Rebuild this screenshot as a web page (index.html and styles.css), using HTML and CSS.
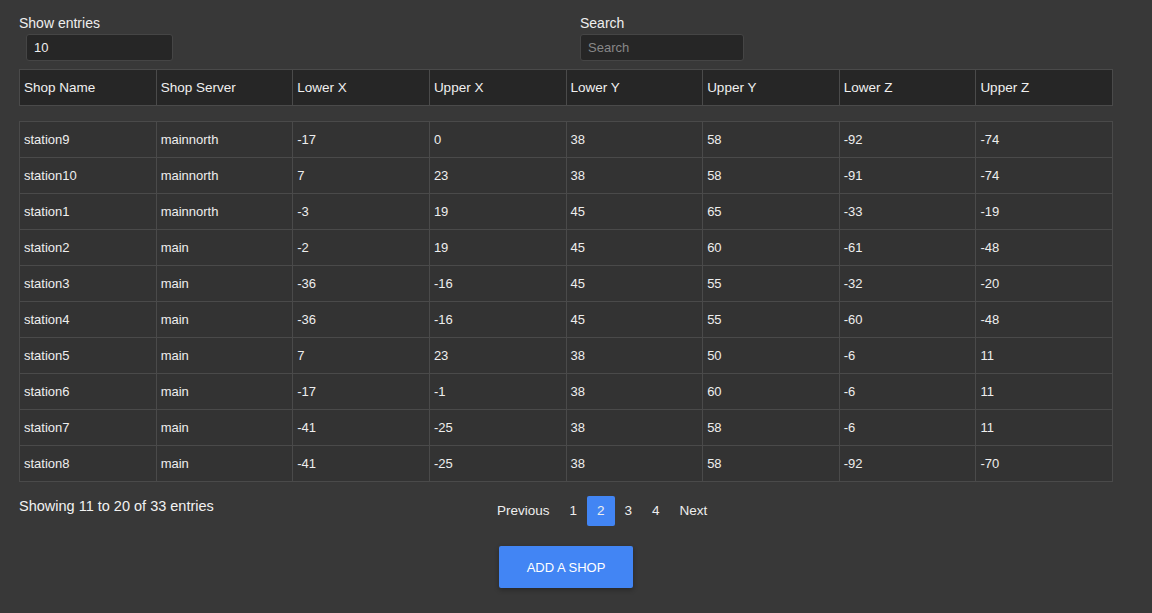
FILE: index.html
```html
<!DOCTYPE html>
<html lang="en">
<head>
    <meta charset="UTF-8">
    <meta name="viewport" content="width=device-width, initial-scale=1.0">
    <title>Shops</title>
    <link rel="stylesheet" href="styles.css">
</head>
<body>
    <div class="container">
        <div class="controls">
            <div class="control">
                <label for="entries">Show entries</label>
                <input type="text" id="entries" class="entries-input" value="10">
            </div>
            <div class="control">
                <label for="search">Search</label>
                <input type="text" id="search" class="search-input" placeholder="Search">
            </div>
        </div>

        <table class="shops">
            <thead>
                <tr>
                    <th>Shop Name</th>
                    <th>Shop Server</th>
                    <th>Lower X</th>
                    <th>Upper X</th>
                    <th>Lower Y</th>
                    <th>Upper Y</th>
                    <th>Lower Z</th>
                    <th>Upper Z</th>
                </tr>
            </thead>
            <tbody class="spacer"><tr><td colspan="8"></td></tr></tbody>
            <tbody class="rows">
                <tr><td>station9</td><td>mainnorth</td><td>-17</td><td>0</td><td>38</td><td>58</td><td>-92</td><td>-74</td></tr>
                <tr><td>station10</td><td>mainnorth</td><td>7</td><td>23</td><td>38</td><td>58</td><td>-91</td><td>-74</td></tr>
                <tr><td>station1</td><td>mainnorth</td><td>-3</td><td>19</td><td>45</td><td>65</td><td>-33</td><td>-19</td></tr>
                <tr><td>station2</td><td>main</td><td>-2</td><td>19</td><td>45</td><td>60</td><td>-61</td><td>-48</td></tr>
                <tr><td>station3</td><td>main</td><td>-36</td><td>-16</td><td>45</td><td>55</td><td>-32</td><td>-20</td></tr>
                <tr><td>station4</td><td>main</td><td>-36</td><td>-16</td><td>45</td><td>55</td><td>-60</td><td>-48</td></tr>
                <tr><td>station5</td><td>main</td><td>7</td><td>23</td><td>38</td><td>50</td><td>-6</td><td>11</td></tr>
                <tr><td>station6</td><td>main</td><td>-17</td><td>-1</td><td>38</td><td>60</td><td>-6</td><td>11</td></tr>
                <tr><td>station7</td><td>main</td><td>-41</td><td>-25</td><td>38</td><td>58</td><td>-6</td><td>11</td></tr>
                <tr><td>station8</td><td>main</td><td>-41</td><td>-25</td><td>38</td><td>58</td><td>-92</td><td>-70</td></tr>
            </tbody>
        </table>

        <div class="footer">
            <div class="info">Showing 11 to 20 of 33 entries</div>
            <div class="pagination">
                <a href="#">Previous</a>
                <a href="#">1</a>
                <a href="#" class="active">2</a>
                <a href="#">3</a>
                <a href="#">4</a>
                <a href="#">Next</a>
            </div>
        </div>

        <div class="actions">
            <button class="add-btn">ADD A SHOP</button>
        </div>
    </div>
</body>
</html>
```

FILE: styles.css
```css
* {
    margin: 0;
    padding: 0;
    box-sizing: border-box;
    font-family: 'Liberation Sans', Arial, sans-serif;
}

body {
    background-color: #383838;
    color: #f2f2f2;
    min-height: 100vh;
}

.container {
    width: 1094px;
    margin-left: 19px;
    padding-top: 14px;
}

.controls {
    display: grid;
    grid-template-columns: 561px 1fr;
}

.control label {
    display: block;
    font-size: 14px;
    line-height: 18px;
    color: #eee;
}

.control input {
    display: block;
    height: 27px;
    margin-top: 2px;
    padding: 0 7px;
    background-color: #262626;
    border: 1px solid #454545;
    border-radius: 3px;
    color: #eee;
    font-size: 13px;
    outline: none;
}

.entries-input {
    width: 147px;
    margin-left: 7px;
}

.search-input {
    width: 164px;
}

.search-input::placeholder {
    color: #888;
}

.shops {
    width: 100%;
    margin-top: 8px;
    border-collapse: collapse;
    table-layout: fixed;
    font-size: 13px;
}

.shops th,
.shops .rows td {
    height: 36px;
    padding: 0 4px;
    text-align: left;
    border: 1px solid #4a4a4a;
}

.shops th {
    background-color: #262626;
    font-weight: normal;
    font-size: 13.5px;
    color: #f0f0f0;
}

.shops .spacer td {
    height: 16px;
    border: none;
}

.shops .rows td {
    background-color: #333;
    color: #eee;
}

.footer {
    display: grid;
    grid-template-columns: 468px 1fr;
    margin-top: 14px;
}

.info {
    font-size: 14.5px;
    padding-top: 2px;
}

.pagination {
    display: flex;
    align-items: center;
}

.pagination a {
    display: block;
    padding: 0 10px;
    line-height: 30px;
    font-size: 13.5px;
    color: #eee;
    text-decoration: none;
    border-radius: 2px;
}

.pagination a.active {
    background-color: #4285f4;
}

.actions {
    display: flex;
    margin-top: 20px;
    padding-left: 480px;
}

.add-btn {
    width: 134px;
    height: 42px;
    background-color: #4285f4;
    color: #fff;
    border: none;
    border-radius: 2px;
    font-size: 13px;
    box-shadow: 0 2px 5px rgba(0, 0, 0, 0.3);
    cursor: pointer;
}
```
